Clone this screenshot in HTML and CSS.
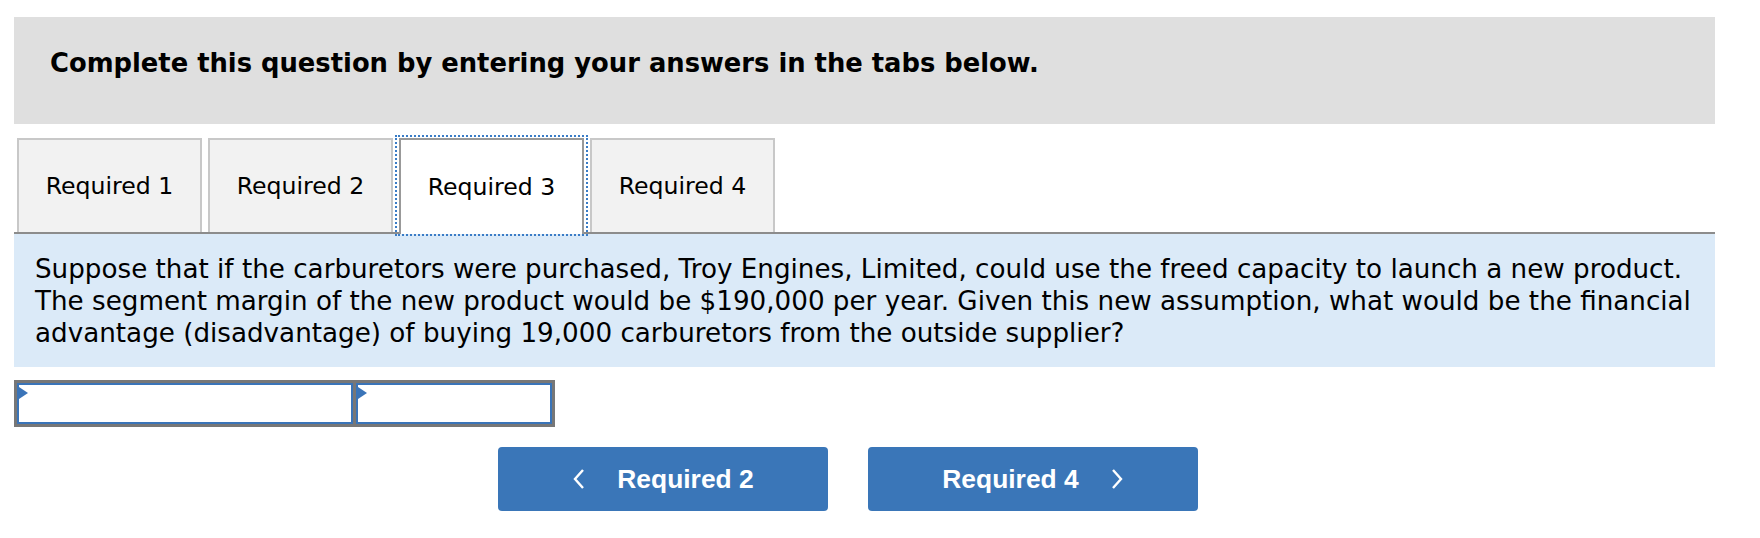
FILE: index.html
```html
<!DOCTYPE html>
<html lang="en">
<head>
<meta charset="utf-8">
<title>Required 3</title>
<link rel="stylesheet" href="styles.css">
</head>
<body>
<div class="page">
  <div class="instructions">Complete this question by entering your answers in the tabs below.</div>
  <div class="tabs">
    <div class="tab">Required 1</div>
    <div class="tab">Required 2</div>
    <div class="tab active">Required 3</div>
    <div class="tab">Required 4</div>
  </div>
  <div class="question">
    <div class="line">Suppose that if the carburetors were purchased, Troy Engines, Limited, could use the freed capacity to launch a new product.</div>
    <div class="line">The segment margin of the new product would be $190,000 per year. Given this new assumption, what would be the financial</div>
    <div class="line">advantage (disadvantage) of buying 19,000 carburetors from the outside supplier?</div>
  </div>
  <div class="answer">
    <div class="cell wide"><span class="flag"></span></div>
    <div class="cell narrow"><span class="flag"></span></div>
  </div>
  <div class="nav">
    <button class="navbtn"><svg class="chev" width="14" height="22" viewBox="0 0 14 22"><polyline points="11,2 3,11 11,20" fill="none" stroke="#fff" stroke-width="2.4"/></svg><span>Required 2</span></button>
    <button class="navbtn"><span>Required 4</span><svg class="chev" width="14" height="22" viewBox="0 0 14 22"><polyline points="3,2 11,11 3,20" fill="none" stroke="#fff" stroke-width="2.4"/></svg></button>
  </div>
</div>
</body>
</html>
```
FILE: styles.css
```css
body {
  margin: 0;
  background: #fff;
  color: #000;
  font-family: "DejaVu Sans", Verdana, sans-serif;
}
.page {
  width: 1701px;
  margin-left: 14px;
  padding-top: 17px;
}
.instructions {
  background: #dfdfdf;
  height: 107px;
  box-sizing: border-box;
  padding: 30px 0 0 36px;
  font-weight: bold;
  font-size: 25.8px;
  line-height: 32px;
}
.tabs {
  display: flex;
  gap: 6px;
  margin-top: 14px;
  padding-left: 3px;
  border-bottom: 2px solid #8c8c8c;
  height: 94px;
}
.tab {
  position: relative;
  width: 185px;
  height: 94px;
  box-sizing: border-box;
  background: #f2f2f2;
  border: 2px solid #c8c8c8;
  border-bottom: none;
  display: flex;
  align-items: center;
  justify-content: center;
  font-size: 23.6px;
}
.tab.active {
  background: #fff;
  border-color: #999;
  height: 96px;
}
.tab.active::after {
  content: "";
  position: absolute;
  left: -6px;
  right: -6px;
  top: -5px;
  bottom: -2px;
  border: 2px dotted #3a7cc6;
}
.question {
  background: #dbeaf8;
  padding: 19px 21px 18px;
  font-size: 26.2px;
  line-height: 32px;
  white-space: nowrap;
}
.answer {
  margin-top: 13px;
  display: flex;
  gap: 3px;
  width: 541px;
  height: 47px;
  box-sizing: border-box;
  padding: 3px;
  background: #777;
}
.cell {
  position: relative;
  background: #fff;
  border: 2px solid #3a74b8;
  box-sizing: border-box;
}
.cell.wide { width: 336px; }
.cell.narrow { width: 196px; }
.flag {
  position: absolute;
  left: 0;
  top: 2px;
  width: 0;
  height: 0;
  border-left: 9px solid #3a74b8;
  border-top: 6px solid transparent;
  border-bottom: 6px solid transparent;
}
.nav {
  display: flex;
  gap: 40px;
  margin-top: 20px;
  padding-left: 484px;
}
.navbtn {
  width: 330px;
  height: 64px;
  background: #3a76b8;
  border: none;
  border-radius: 4px;
  color: #fff;
  font-family: "Liberation Sans", Arial, sans-serif;
  font-weight: bold;
  font-size: 26.4px;
  display: flex;
  align-items: center;
  justify-content: center;
  gap: 31px;
  padding: 0;
}
.chev { display: block; }
```
